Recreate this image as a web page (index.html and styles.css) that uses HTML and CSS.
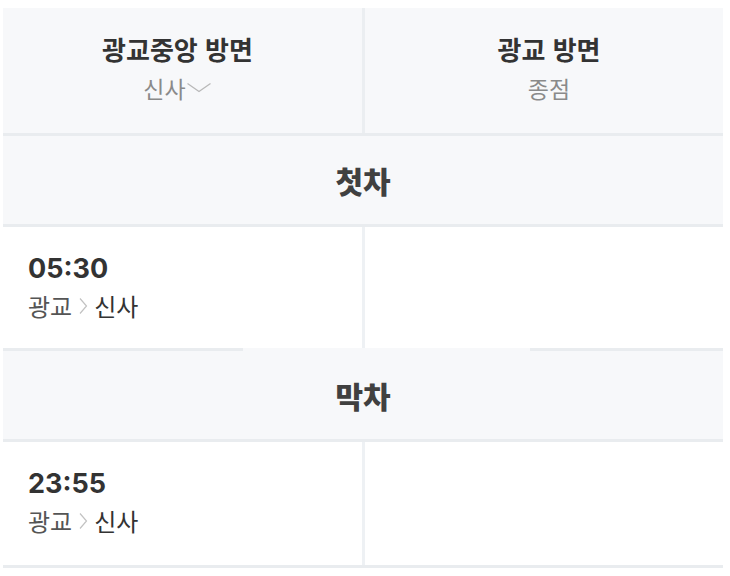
FILE: index.html
```html
<!DOCTYPE html>
<html lang="ko">
<head>
<meta charset="utf-8">
<link rel="stylesheet" href="styles.css">
</head>
<body>
<div class="table">
  <div class="row head">
    <div class="cell dir left">
      <div class="title">광교중앙 방면</div>
      <div class="sub">신사<svg class="down" width="26" height="11" viewBox="0 0 26 11"><path d="M1.5 1.5 L13 9.5 L24.5 1.5" fill="none" stroke="#b8b8b8" stroke-width="1.3"/></svg></div>
    </div>
    <div class="cell dir right">
      <div class="title">광교 방면</div>
      <div class="sub">종점</div>
    </div>
  </div>
  <div class="sep"></div>
  <div class="section">첫차</div>
  <div class="sep"></div>
  <div class="row data">
    <div class="cell time">
      <div class="clock">05:30</div>
      <div class="route"><span class="from">광교</span><svg class="arrow" width="10" height="18" viewBox="0 0 10 18"><path d="M2 1.5 L8.5 9 L2 16.5" fill="none" stroke="#c2c2c2" stroke-width="1.2"/></svg><span class="to">신사</span></div>
    </div>
    <div class="cell time"></div>
  </div>
  <div class="sep gap"></div>
  <div class="section">막차</div>
  <div class="sep"></div>
  <div class="row data last">
    <div class="cell time">
      <div class="clock">23:55</div>
      <div class="route"><span class="from">광교</span><svg class="arrow" width="10" height="18" viewBox="0 0 10 18"><path d="M2 1.5 L8.5 9 L2 16.5" fill="none" stroke="#c2c2c2" stroke-width="1.2"/></svg><span class="to">신사</span></div>
    </div>
    <div class="cell time"></div>
  </div>
  <div class="sep"></div>
</div>
</body>
</html>
```

FILE: styles.css
```css
html, body {
  margin: 0;
  padding: 0;
  background: #ffffff;
}
body {
  font-family: "Inter", "Noto Sans CJK KR", sans-serif;
  color: #333333;
}
.table {
  width: 720px;
  margin: 8px 0 0 3px;
}
.row {
  display: grid;
  grid-template-columns: 359px 358px;
  column-gap: 3px;
}
.head {
  background: #ebeef1;
  height: 125px;
}
.data {
  background: #eef1f4;
}
.cell {
  display: flex;
  flex-direction: column;
}
.dir {
  background: #f7f8fa;
  align-items: center;
  padding-top: 23px;
  box-sizing: border-box;
}
.dir.left {
  padding-right: 10px;
}
.dir.right {
  padding-left: 10px;
}
.title {
  font-family: "Noto Sans CJK KR", sans-serif;
  font-size: 26px;
  font-weight: 700;
  line-height: 36px;
  color: #333333;
}
.sub {
  font-family: "Noto Sans CJK KR", sans-serif;
  font-size: 23px;
  line-height: 30px;
  margin-top: 6px;
  color: #8a8a8a;
  display: flex;
  align-items: center;
}
.down {
  margin-left: 0;
  margin-top: -2px;
}
.sep {
  height: 3px;
  background: #e9ecef;
}
.sep.gap {
  background: linear-gradient(to right, #e9ecef 0, #e9ecef 240px, #f7f8fa 240px, #f7f8fa 527px, #e9ecef 527px);
}
.section {
  height: 88px;
  background: #f7f8fa;
  display: flex;
  align-items: center;
  justify-content: center;
  font-family: "Noto Sans CJK KR", sans-serif;
  font-size: 30px;
  font-weight: 900;
  color: #404040;
  box-sizing: border-box;
}
.time {
  background: #ffffff;
  height: 121px;
  padding: 26px 0 0 25px;
  box-sizing: border-box;
}
.last .time {
  height: 123px;
}
.clock {
  font-family: "Inter", sans-serif;
  font-size: 27px;
  font-weight: 700;
  line-height: 32px;
  color: #333333;
}
.route {
  display: flex;
  align-items: center;
  font-family: "Noto Sans CJK KR", sans-serif;
  font-size: 24px;
  line-height: 30px;
  margin-top: 6px;
}
.from {
  color: #555555;
}
.arrow {
  margin: 0 6px 0 6px;
}
.to {
  color: #333333;
}
```
